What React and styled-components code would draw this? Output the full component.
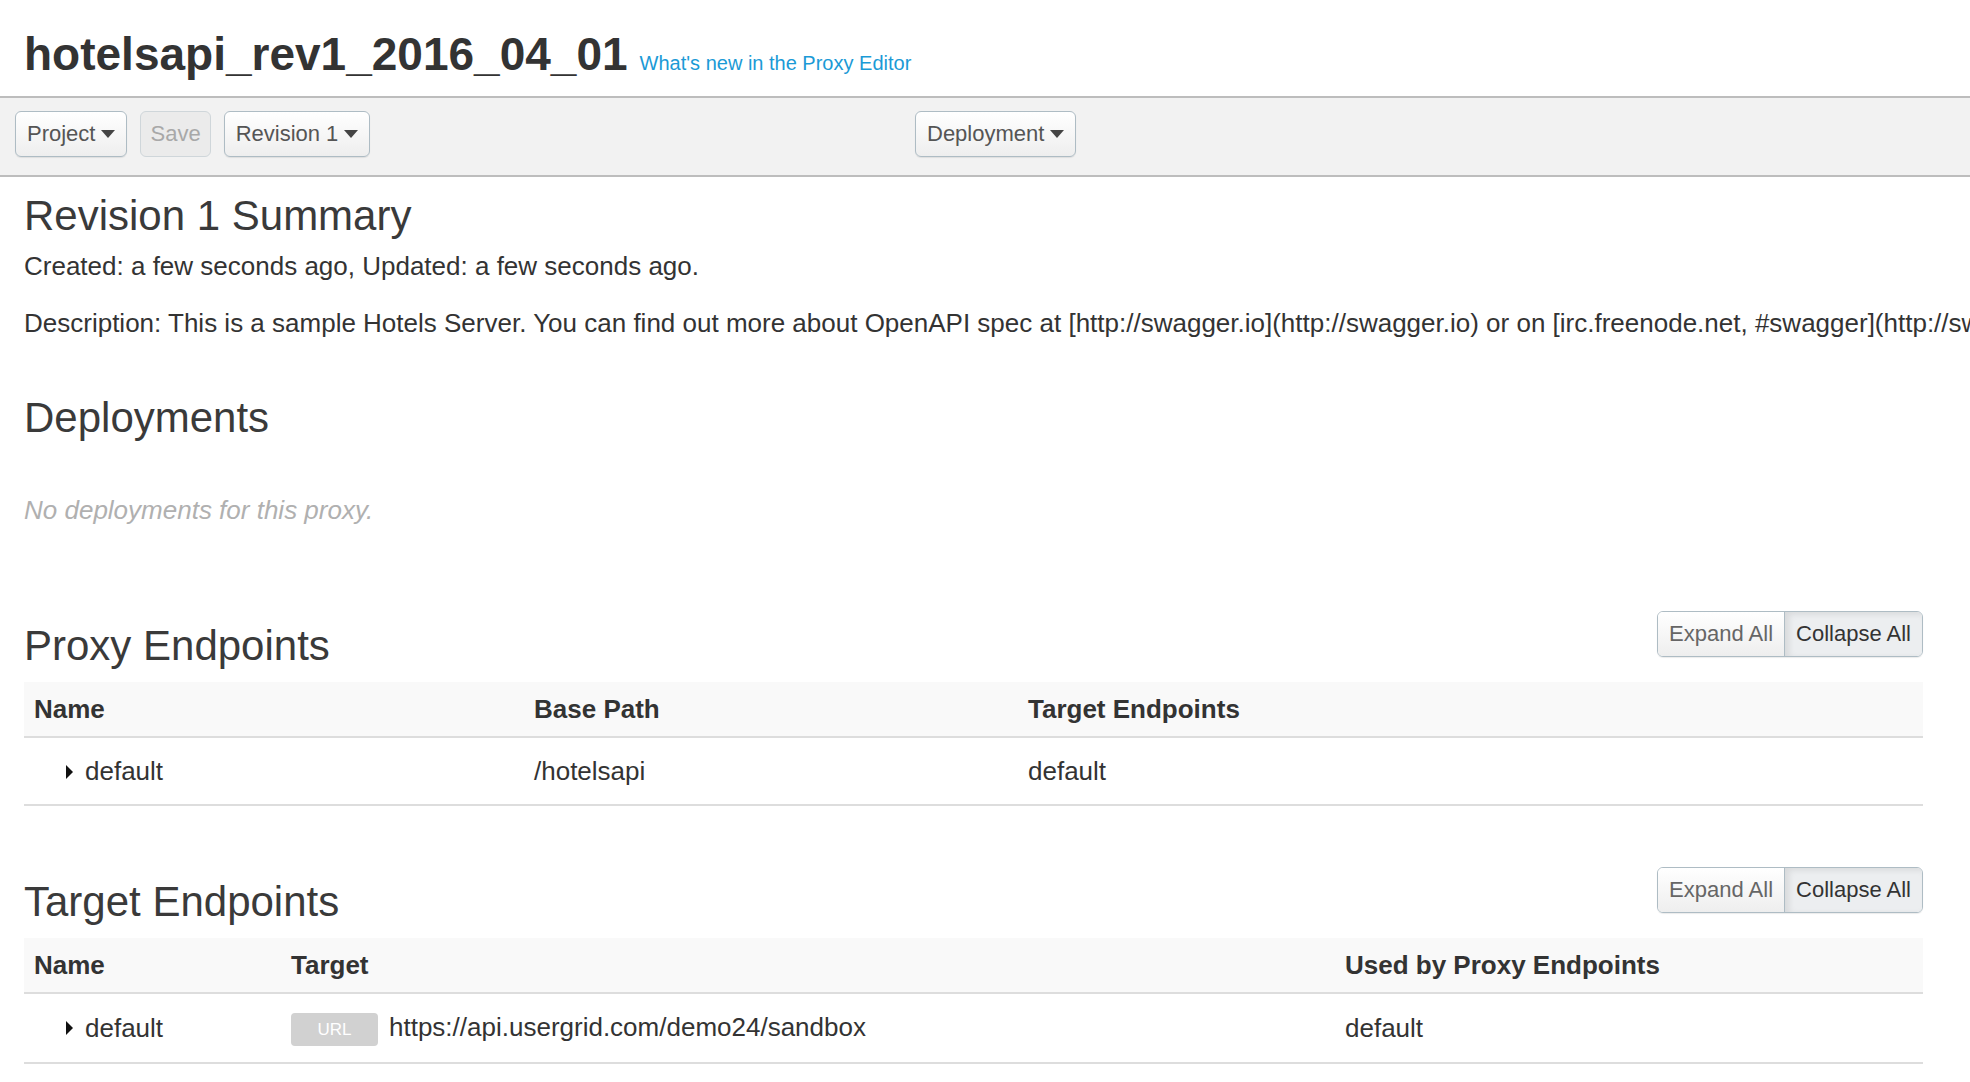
import React from "react"
import styled, { createGlobalStyle } from "styled-components"

const GlobalStyle = createGlobalStyle`
  html, body {
    margin: 0;
    padding: 0;
    background: #fff;
    overflow-x: hidden;
  }
  body {
    font-family: "Liberation Sans", Arial, Helvetica, sans-serif;
    color: #333;
  }
  * { box-sizing: border-box; }
`

const Header = styled.header`
  display: flex;
  align-items: baseline;
  gap: 12px;
  height: 96px;
  padding: 31px 0 0 24px;
`

const Title = styled.h1`
  margin: 0;
  font-size: 46px;
  line-height: 1;
  font-weight: bold;
  color: #333;
`

const NewsLink = styled.a`
  font-size: 20px;
  color: #1b9ad6;
  text-decoration: none;
`

const Toolbar = styled.div`
  display: grid;
  grid-template-columns: 900px auto;
  height: 81px;
  padding: 13px 15px 0;
  background: #f2f2f2;
  border-top: 2px solid #bdbdbd;
  border-bottom: 2px solid #bdbdbd;
`

const ButtonRow = styled.div`
  display: flex;
  align-items: flex-start;
  gap: 13px;
`

const ToolButton = styled.button`
  display: inline-flex;
  align-items: center;
  gap: 6px;
  height: 46px;
  padding: 0 ${p => (p.$tight ? "9px" : "11px")};
  font-family: inherit;
  font-size: 22px;
  color: ${p => (p.disabled ? "#a8a8a8" : "#555")};
  background: ${p => (p.disabled ? "#ebebeb" : "linear-gradient(#ffffff, #eeeeee)")};
  border: 1px solid ${p => (p.disabled ? "#cfd6da" : "#aebcc4")};
  border-radius: 6px;
  box-shadow: ${p => (p.disabled ? "none" : "0 1px 1px rgba(0,0,0,0.08)")};
`

const Caret = styled.span`
  display: inline-block;
  width: 0;
  height: 0;
  border-left: 7px solid transparent;
  border-right: 7px solid transparent;
  border-top: 8px solid #444;
`

const Main = styled.main`
  padding: 0 47px 0 24px;
`

const Heading = styled.h2`
  margin: ${p => p.$mt || 0}px 0 0;
  padding-top: ${p => p.$pt || 0}px;
  font-size: 42px;
  line-height: 50px;
  font-weight: 300;
  color: #3a3a3a;
`

const Text = styled.p`
  margin: ${p => p.$mt || 0}px 0 0;
  font-size: 26px;
  line-height: 34px;
  color: ${p => (p.$muted ? "#b0b0b0" : "#333")};
  font-style: ${p => (p.$muted ? "italic" : "normal")};
  white-space: nowrap;
`

const SectionHead = styled.div`
  display: flex;
  justify-content: space-between;
  align-items: flex-start;
  margin-top: ${p => p.$mt}px;
`

const Group = styled.div`
  display: flex;
  height: 46px;
  border: 1px solid #aebcc4;
  border-radius: 6px;
  overflow: hidden;
  box-shadow: 0 1px 1px rgba(0,0,0,0.08);
`

const GroupButton = styled.button`
  padding: 0 11px;
  font-family: inherit;
  font-size: 22px;
  border: none;
  border-left: ${p => (p.$active ? "1px solid #aebcc4" : "none")};
  color: ${p => (p.$active ? "#333" : "#666")};
  background: ${p => (p.$active ? "#eceef0" : "linear-gradient(#ffffff, #eeeeee)")};
  box-shadow: ${p => (p.$active ? "inset 4px 2px 6px rgba(0,0,0,0.09)" : "none")};
`

const Table = styled.table`
  width: 100%;
  margin-top: 11px;
  border-collapse: separate;
  border-spacing: 0;
  table-layout: fixed;
  font-size: 26px;
`

const Th = styled.th`
  width: ${p => (p.$w ? `${p.$w}px` : "auto")};
  padding: 10px 10px;
  line-height: 34px;
  text-align: left;
  font-weight: bold;
  color: #333;
  background: #f9f9f9;
  border-bottom: 2px solid #dddddd;
`

const Td = styled.td`
  padding: 16px 10px;
  line-height: 34px;
  color: #333;
  border-bottom: 2px solid #dddddd;
  white-space: nowrap;
`

const Toggle = styled.span`
  display: inline-block;
  width: 0;
  height: 0;
  margin: 0 12px 3px 32px;
  border-top: 7px solid transparent;
  border-bottom: 7px solid transparent;
  border-left: 7px solid #111;
  vertical-align: middle;
`

const Badge = styled.span`
  display: inline-block;
  width: 87px;
  height: 33px;
  margin-right: 11px;
  line-height: 33px;
  text-align: center;
  font-size: 17px;
  color: #fff;
  background: #d1d1d1;
  border-radius: 4px;
  vertical-align: middle;
`

const ExpandCollapse = () => (
  <Group>
    <GroupButton>Expand All</GroupButton>
    <GroupButton $active>Collapse All</GroupButton>
  </Group>
)

const App = () => {
  return (
    <>
      <GlobalStyle />
      <Header>
        <Title>hotelsapi_rev1_2016_04_01</Title>
        <NewsLink href="#">What's new in the Proxy Editor</NewsLink>
      </Header>

      <Toolbar>
        <ButtonRow>
          <ToolButton>Project <Caret /></ToolButton>
          <ToolButton disabled $tight>Save</ToolButton>
          <ToolButton>Revision 1 <Caret /></ToolButton>
        </ButtonRow>
        <ButtonRow>
          <ToolButton>Deployment <Caret /></ToolButton>
        </ButtonRow>
      </Toolbar>

      <Main>
        <Heading $mt={14}>Revision 1 Summary</Heading>
        <Text $mt={8}>Created: a few seconds ago, Updated: a few seconds ago.</Text>
        <Text $mt={23}>
          Description: This is a sample Hotels Server. You can find out more about OpenAPI spec at [http://swagger.io](http://swagger.io) or on [irc.freenode.net, #swagger](http://swagger.io/irc/).
        </Text>

        <Heading $mt={53}>Deployments</Heading>
        <Text $mt={50} $muted>No deployments for this proxy.</Text>

        <SectionHead $mt={84}>
          <Heading $pt={10}>Proxy Endpoints</Heading>
          <ExpandCollapse />
        </SectionHead>
        <Table>
          <thead>
            <tr>
              <Th $w={500}>Name</Th>
              <Th $w={494}>Base Path</Th>
              <Th>Target Endpoints</Th>
            </tr>
          </thead>
          <tbody>
            <tr>
              <Td><Toggle />default</Td>
              <Td>/hotelsapi</Td>
              <Td>default</Td>
            </tr>
          </tbody>
        </Table>

        <SectionHead $mt={61}>
          <Heading $pt={10}>Target Endpoints</Heading>
          <ExpandCollapse />
        </SectionHead>
        <Table>
          <thead>
            <tr>
              <Th $w={257}>Name</Th>
              <Th $w={1054}>Target</Th>
              <Th>Used by Proxy Endpoints</Th>
            </tr>
          </thead>
          <tbody>
            <tr>
              <Td><Toggle />default</Td>
              <Td><Badge>URL</Badge>https://api.usergrid.com/demo24/sandbox</Td>
              <Td>default</Td>
            </tr>
          </tbody>
        </Table>
      </Main>
    </>
  )
}

export default App
